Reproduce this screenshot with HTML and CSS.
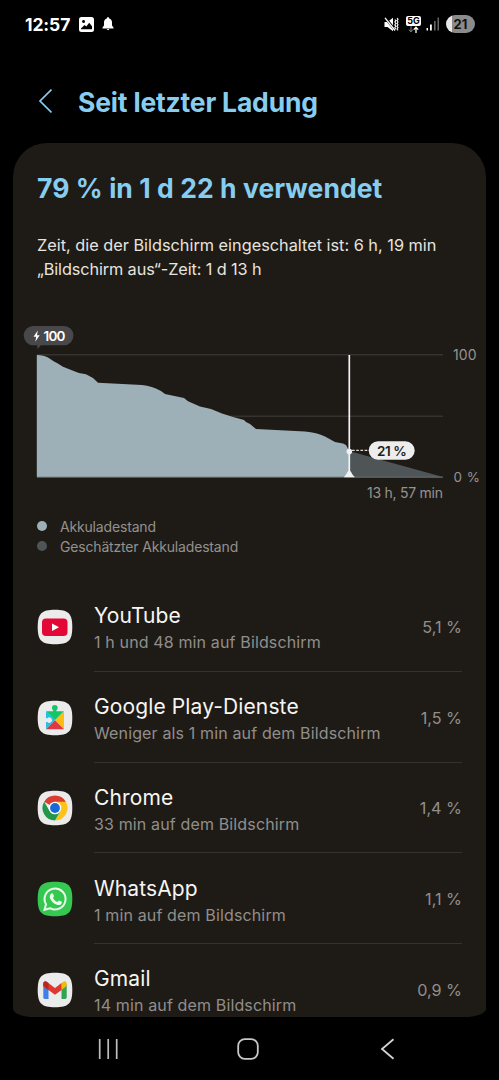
FILE: index.html
```html
<!DOCTYPE html>
<html lang="de">
<head>
<meta charset="utf-8">
<title>Seit letzter Ladung</title>
<link rel="stylesheet" href="styles.css">
</head>
<body>
<div class="screen">
  <header class="status">
    <span class="clock">12:57</span>
    <svg class="st-pic" width="15" height="15" viewBox="0 0 15 15"><path fill="#fff" fill-rule="evenodd" d="M2.500 0h10A2.500 2.500 0 0 1 15 2.500v10a2.500 2.500 0 0 1-2.500 2.500h-10A2.500 2.500 0 0 1 0 12.500v-10A2.500 2.500 0 0 1 2.500 0ZM2 12.300h11V9.200L10.200 5.800 7.300 9.400 5.600 8 2 11.500ZM4.500 3a1.500 1.500 0 1 0 .01 3a1.500 1.500 0 0 0-.01-3Z"/></svg>
    <svg class="st-bell" width="12" height="14" viewBox="0 0 12 14"><path fill="#fff" d="M6 .3c.8 0 1.200.5 1.200 1.200C9 2 10 3.500 10 5.500v3l1.500 2v.9H.5v-.9l1.500-2v-3C2 3.500 3 2 4.800 1.500 4.800.8 5.200.3 6 .3ZM4.800 12h2.400c0 1.600-2.400 1.600-2.400 0Z"/></svg>
    <span class="grow"></span>
    <svg class="st-mute" width="15" height="15" viewBox="0 0 15 15"><path fill="#fff" d="M.5 5h3L9 .8v13.400L3.500 10h-3Z"/><path d="M1 .5l10.500 13" stroke="#000" stroke-width="2.600"/><path d="M1 .8l10 12.700" stroke="#fff" stroke-width="1.300"/><path d="M10.800 2.500l1 1.200-1 1.400 1 1.400-1 1.400 1 1.400-1 1.400 1 1.500M13 1l1 1.200-1 1.400 1 1.400-1 1.400 1 1.400-1 1.400 1 1.400-1 1.400 1 1.300" fill="none" stroke="#fff" stroke-width="1.100"/></svg>
    <span class="net"><b>5G</b><svg width="15" height="7" viewBox="0 0 15 7"><path d="M5 .2v5.500M2.700 3.500L5 5.800l2-2.300" stroke="#888" fill="none"/><path d="M10 7V1.300M7.800 3.600L10 1.300l2.200 2.300" stroke="#fff" stroke-width="1.300" fill="none"/></svg></span>
    <svg class="st-sig" width="14" height="14" viewBox="0 0 14 14"><path fill="#fff" d="M.5 11H2v2.500H.5zM4 7.500h1.800v6H4z"/><path fill="#666" d="M8 4h1.600v9.500H8zM11.500.5h1.500v13h-1.500z"/></svg>
    <span class="battery">21</span>
  </header>

  <div class="titlebar">
    <svg width="14" height="26" viewBox="0 0 14 26"><path d="M13.500 1.500L2 13l11.500 11.500" fill="none" stroke="#87cdf0" stroke-width="1.700"/></svg>
    <h1>Seit letzter Ladung</h1>
  </div>

  <main class="card">
    <h2>79 % in 1 d 22 h verwendet</h2>
    <p class="info">Zeit, die der Bildschirm eingeschaltet ist: 6 h, 19 min<br><span class="off-time">„Bildschirm aus“-Zeit: 1 d 13 h</span></p>

    <svg class="chart" width="473" height="190" viewBox="13 320 473 190">
      <path d="M37 354.800H443M37 416.200H443" stroke="#35332f" stroke-width="1.600"/>
      <path fill="#4f5557" d="M349 451L443 477H349Z"/>
      <path fill="#9dafb7" d="M36.800 355Q44 355 48 357.500L54 361.500 57 363 63 366.800 75 371.500 79 373 86 374.300 93 378 98 382.700 142 385Q152 386 161 391L165 394 184 398 188 401.300 200 406.500 211 409 222 413.500 233 417 244 420 246 422 250 424 256 429 305 431.500Q317 432.500 325 436.500L335 442 343 443.500 346 445 349.300 451V477H36.800Z"/>
      <path d="M37 477.200H443" stroke="#6a7378" stroke-width="1"/>
      <path d="M349.300 355V477" stroke="#f4f4f4" stroke-width="1.700"/>
      <path d="M352 450.300H370" stroke="#dedbd2" stroke-width="1.300" stroke-dasharray="2.700 1.500"/>
      <circle cx="349.300" cy="451.600" r="2.800" fill="#f0f1f2"/>
      <path fill="#f0f1f2" d="M343.800 477.300C346.500 475 347.500 470.500 349.300 470.500S352 475 355 477.300Z"/>
      <path fill="#48484b" d="M37 343H43.500C40 345 38.500 348.800 37.500 348.800Z"/>
      <rect x="23.700" y="326" width="49.800" height="19.200" rx="9.600" fill="#48484b"/>
      <path fill="#fff" d="M37.800 330.500L33.500 336.700H36.200L35.300 341.800 39.700 335.200H37Z"/>
      <text class="pill" x="43.500" y="340.800" fill="#fff" textLength="22">100</text>
      <rect x="368.700" y="441.200" width="46" height="18.600" rx="9.300" fill="#ededee"/>
      <text class="pill" x="377" y="455.800" fill="#1e1c19" textLength="29.800">21 %</text>
      <text class="axis" x="453" y="359.600" textLength="23.500">100</text>
      <text class="axis zero" x="453.500" y="481.600">0 %</text>
      <text class="axis" x="367" y="497.700" textLength="76">13 h, 57 min</text>
    </svg>

    <ul class="legend">
      <li><i class="dot now"></i><span>Akkuladestand</span></li>
      <li><i class="dot est"></i><span>Geschätzter Akkuladestand</span></li>
    </ul>

    <section class="apps">
      <div class="row">
        <svg class="icon" viewBox="0 0 36 36"><path class="tile" d="M18 .7C31.500.7 35.300 4.500 35.300 18S31.500 35.300 18 35.300.7 31.500.7 18 4.500.7 18 .7Z"/><rect x="5" y="9.500" width="25.500" height="17.500" rx="4" fill="#e30735"/><path fill="#fff" d="M15 14.500l7 3.800-7 3.700Z"/></svg>
        <div class="body"><div><h3>YouTube</h3><p>1 h und 48 min auf Bildschirm</p></div><span class="pct">5,1 %</span></div>
      </div>
      <div class="row">
        <svg class="icon" viewBox="0 0 36 36"><path class="tile" d="M18 .7C31.500.7 35.300 4.500 35.300 18S31.500 35.300 18 35.300.7 31.500.7 18 4.500.7 18 .7Z"/><path fill="#26bfe3" d="M9 11.200L18 20.200 9 29.200Z"/><path fill="#14c56a" d="M9 11.200H16.200V10.200A2.900 2.900 0 1 1 19.400 10.200V11.200H27L18 20.200Z"/><path fill="#ebebeb" d="M8.500 18.300H10.200A2.700 2.700 0 1 1 10.200 21.900H8.500Z"/><path fill="#fdbd12" d="M27 11.200V29.200L18 20.200Z"/><path fill="#df3845" d="M18 20.200L27 29.200H9Z"/></svg>
        <div class="body"><div><h3>Google Play-Dienste</h3><p>Weniger als 1 min auf dem Bildschirm</p></div><span class="pct">1,5 %</span></div>
      </div>
      <div class="row">
        <svg class="icon" viewBox="0 0 36 36"><path class="tile" d="M18 .7C31.500.7 35.300 4.500 35.300 18S31.500 35.300 18 35.300.7 31.500.7 18 4.500.7 18 .7Z"/><path fill="#dc3d31" d="M18 18L7.170 11.750A12.500 12.500 0 0 1 28.830 11.750Z"/><path fill="#fcc31a" d="M18 11.750H28.830A12.500 12.500 0 0 1 18 30.500L23.400 21.100Z"/><path fill="#24984a" d="M7.170 11.750A12.500 12.500 0 0 0 18 30.500L23.400 21.100 12.600 21.100Z"/><circle cx="18" cy="18" r="6.300" fill="#fff"/><circle cx="18" cy="18" r="4.900" fill="#1769d8"/></svg>
        <div class="body"><div><h3>Chrome</h3><p>33 min auf dem Bildschirm</p></div><span class="pct">1,4 %</span></div>
      </div>
      <div class="row">
        <svg class="icon" viewBox="0 0 36 36"><path fill="#35c851" d="M18 .7C31.500.7 35.300 4.500 35.300 18S31.500 35.300 18 35.300.7 31.500.7 18 4.500.7 18 .7Z"/><path fill="none" stroke="#e9fbe9" stroke-width="2" d="M7.500 28.700L9 23.300A10.500 10.500 0 1 1 13 27.200Z"/><path fill="#e9fbe9" d="M14.300 12.400c.8-.5 1.500-.2 1.800.5l.9 2.100c.1.700-.8 1.500-1 1.900 1 2 2.400 3.300 4.300 4 .6-.3 1.100-1.500 1.700-1.500l2.500 1.200c.8.6.3 2-.4 2.600-1.200 1-2.800 1.100-4.300.5-3.300-1.200-5.500-3.600-6.800-6.500-.6-1.700-.1-3.600 1.300-4.800Z"/></svg>
        <div class="body"><div><h3>WhatsApp</h3><p>1 min auf dem Bildschirm</p></div><span class="pct">1,1 %</span></div>
      </div>
      <div class="row">
        <svg class="icon" viewBox="0 0 36 36"><path class="tile" d="M18 .7C31.500.7 35.300 4.500 35.300 18S31.500 35.300 18 35.300.7 31.500.7 18 4.500.7 18 .7Z"/><path fill="#3f7fe8" d="M6.300 12L11.500 15.500V27H8Q6.300 27 6.300 25.300Z"/><path fill="#32a350" d="M24.500 15.500L29.700 12V25.300Q29.700 27 28 27H24.500Z"/><path fill="#f4b90e" d="M24.500 11L26 9.900C28 8.500 29.700 10 29.700 11.600V14L24.500 18Z"/><path fill="#dd392f" d="M6.300 14V11.600C6.300 10 8 8.500 10 9.900L18 15.900 24.500 11V18L18 22.800 11.500 18Z"/><path fill="#b9261f" d="M6.300 14V11.600C6.300 10 8 8.500 10 9.900L11.500 11V18Z"/></svg>
        <div class="body"><div><h3>Gmail</h3><p>14 min auf dem Bildschirm</p></div><span class="pct">0,9 %</span></div>
      </div>
    </section>
  </main>

  <nav class="nav">
    <svg width="22" height="22" viewBox="0 0 22 22"><path d="M2.700 1v20M11.200 1v20M19.700 1v20" stroke="#bdbdbd" stroke-width="1.700"/></svg>
    <svg width="22" height="22" viewBox="0 0 22 22"><rect x="1.200" y="1.200" width="19.600" height="19.600" rx="6.500" fill="none" stroke="#c8c8c8" stroke-width="1.800"/></svg>
    <svg width="22" height="22" viewBox="0 0 22 22"><path d="M17.500 1.200L6 11 17.500 20.800" fill="none" stroke="#d2d2d2" stroke-width="1.800"/></svg>
  </nav>
</div>
</body>
</html>
```
FILE: styles.css
```css
* { box-sizing: border-box; margin: 0; padding: 0; }
body { background: #000; font-family: Inter, "Liberation Sans", sans-serif; }
.screen { width: 499px; height: 1080px; background: #000; overflow: hidden; display: flex; flex-direction: column; }

.status { height: 48px; padding: 0 24px 0 25px; display: flex; align-items: center; flex: none; }
.grow { flex: 1; }
.clock { color: #fff; font-size: 17.5px; font-weight: 700; letter-spacing: -.1px; width: 54px; }
.st-bell { margin-left: 8px; }
.st-mute { margin-right: 7px; }
.net { width: 15px; margin-right: 5px; display: flex; flex-direction: column; align-items: center; }
.net b { width: 15px; height: 10px; border-radius: 2px; background: #fff; color: #000; font-size: 9px; line-height: 10px; text-align: center; }
.net svg { display: block; }
.st-sig { margin-right: 6px; }
.battery { width: 29px; height: 18px; border-radius: 9px; background: linear-gradient(90deg, #e8e8e8 21%, #8b8b8b 21%); color: #111; font-size: 13px; font-weight: 700; line-height: 18px; text-align: center; }

.titlebar { height: 95px; padding-left: 38px; display: flex; align-items: center; gap: 26px; flex: none; }
.titlebar svg { margin-top: 11px; }
h1 { margin-top: 12px; color: #87cdf0; font-size: 26.5px; font-weight: 700; letter-spacing: -.18px; white-space: nowrap; }

.card { width: 473px; height: 874px; margin-left: 13px; background: #1e1b17; border-radius: 34px 34px 22px 22px / 34px 34px 8px 8px; overflow: hidden; flex: none; }
h2 { padding-left: 24px; margin-top: 28px; height: 34px; line-height: 34px; color: #87cdf0; font-size: 26.5px; font-weight: 700; letter-spacing: .06px; white-space: nowrap; }
.info { margin-top: 28px; padding-left: 24px; height: 87px; color: #e7e4df; font-size: 16.3px; line-height: 24px; white-space: nowrap; }
.off-time { letter-spacing: -.12px; }
.chart { display: block; }
.pill { font-size: 13.5px; font-weight: 600; }
.axis { font-size: 14px; fill: #96938f; }
.zero { font-size: 13.4px; word-spacing: 1px; }

.legend { list-style: none; height: 71px; padding: 6px 0 0 24px; color: #94918d; font-size: 14px; letter-spacing: -.17px; }
.legend li { height: 20px; display: flex; align-items: center; gap: 13px; }
.dot { width: 10px; height: 10px; border-radius: 50%; }
.now { background: #9dafb7; }
.est { background: #4f5557; }

.row { height: 90.75px; padding: 0 24px; display: flex; align-items: center; gap: 21px; }
.icon { width: 36px; height: 36px; margin-top: 1px; flex: none; }
.tile { fill: #ebebeb; }
.body { flex: 1; height: 100%; padding-top: 2px; display: flex; align-items: center; justify-content: space-between; border-bottom: 1.5px solid #35322e; }
.row:last-child .body { border-color: transparent; }
h3 { padding-top: 4px; color: #f7f5f2; font-size: 21px; font-weight: 400; line-height: 28px; letter-spacing: .12px; white-space: nowrap; }
.body p { color: #918e8a; font-size: 16px; line-height: 25px; letter-spacing: .14px; white-space: nowrap; }
.pct { color: #918e8a; font-size: 16.2px; }

.nav { height: 63px; padding: 0 101px 0 97px; display: flex; align-items: center; justify-content: space-between; }
```
